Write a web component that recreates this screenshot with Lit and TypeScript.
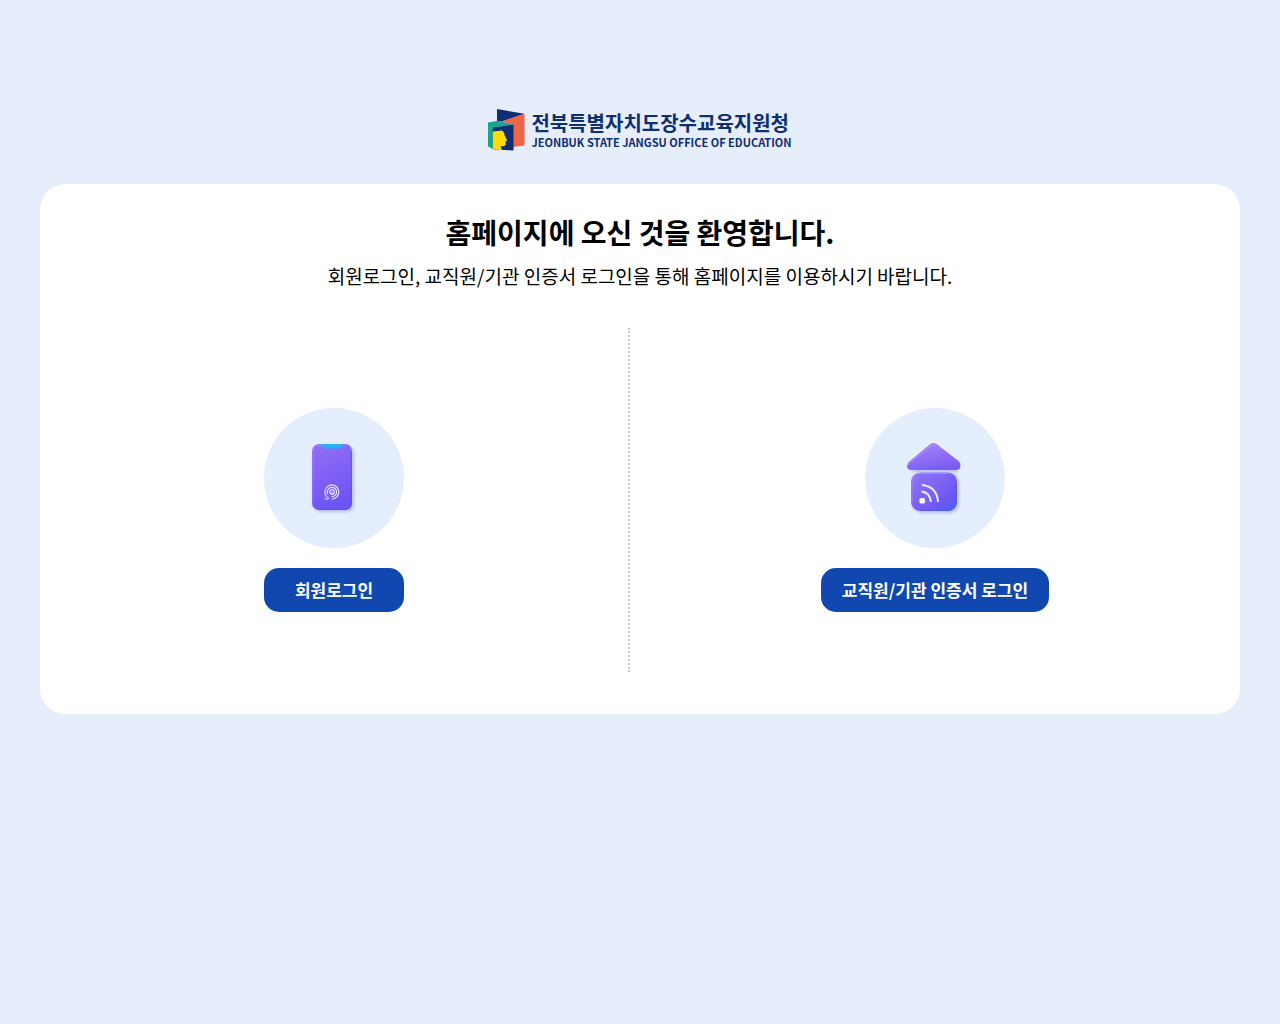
import { LitElement, html, css, svg } from "lit";
import { customElement, property } from "lit/decorators.js";

@customElement("office-logo")
class OfficeLogo extends LitElement {
  static styles = css`
    :host { display: block; }
    .logo {
      display: flex;
      align-items: center;
      gap: 6px;
      color: #0e2f72;
      text-decoration: none;
    }
    .mark { display: block; width: 37px; height: 42px; flex: none; }
    .names { display: flex; flex-direction: column; gap: 2px; padding-top: 2px; }
    .ko {
      font: 700 20px/20px Roboto, "Noto Sans CJK KR", sans-serif;
      white-space: nowrap;
    }
    .en {
      font: 700 11px/12px "Noto Sans CJK KR", sans-serif;
      white-space: nowrap;
    }
  `;

  render() {
    return html`
      <a class="logo" href="#">
        <svg class="mark" viewBox="0 0 37 42" aria-hidden="true">
          <path d="M9 0 36.500 4.800 14 12.500 9 12Z" fill="#0e2f72" />
          <path d="M36.500 4.800V36.500L25 38V15.500L13 12.500Z" fill="#ee6547" />
          <path d="M0 13.500 10 11.800 25.500 15.500 5 18.500V40L0 37.500Z" fill="#16a58e" />
          <path d="M4.800 18.500 25.500 15.500V41.500L4.800 40.500Z" fill="#0e2f72" />
          <path d="M4.800 22.500 14 21.500C16 23 16.500 24.500 16.700 26.500L19.200 31.500 17.500 32.500 17.800 35.500 16.500 37 12.500 37.500 14 41 4.800 40.500Z" fill="#fddc0c" />
        </svg>
        <span class="names">
          <span class="ko">전북특별자치도장수교육지원청</span>
          <span class="en">JEONBUK STATE JANGSU OFFICE OF EDUCATION</span>
        </span>
      </a>
    `;
  }
}

const phoneIcon = svg`
  <defs>
    <linearGradient id="body" x1="0" y1="0" x2="0.3" y2="1">
      <stop offset="0" stop-color="#9470f8" />
      <stop offset="1" stop-color="#6f54f4" />
    </linearGradient>
    <linearGradient id="notch" x1="0" x2="1">
      <stop offset="0" stop-color="#4a9cf5" />
      <stop offset="0.500" stop-color="#18bdf2" />
      <stop offset="1" stop-color="#4a9cf5" />
    </linearGradient>
    <filter id="soft" x="-20%" y="-20%" width="150%" height="150%">
      <feGaussianBlur stdDeviation="1.500" />
    </filter>
  </defs>
  <rect x="50" y="38" width="40" height="66" rx="7" fill="#8fa0d8" opacity="0.600" filter="url(#soft)" />
  <rect x="48" y="36" width="40" height="66" rx="7" fill="url(#body)" />
  <path d="M49 95V43Q49 37 55 37H82" fill="none" stroke="#b09aff" stroke-width="1" opacity="0.500" />
  <path d="M54 101.300H81Q87.300 101.300 87.300 95V43" fill="none" stroke="#5544d8" stroke-width="1" opacity="0.500" />
  <path d="M56 36H80Q79 40.500 75 40.500H61Q57 40.500 56 36Z" fill="url(#notch)" />
  <g fill="none" stroke="#e4dcff" stroke-width="1.200" stroke-linecap="round">
    <path d="M62.500 88.500A7 7 0 1 1 68 91" />
    <path d="M63.500 85.500A4.700 4.700 0 1 1 68 88.700" />
    <circle cx="68" cy="84" r="2.300" />
    <path d="M68 84v1.500M61 91h3v-2" />
  </g>
`;

const houseIcon = svg`
  <defs>
    <linearGradient id="roof" x1="0.200" y1="0" x2="0.600" y2="1">
      <stop offset="0" stop-color="#a585f8" />
      <stop offset="1" stop-color="#7c5cf2" />
    </linearGradient>
    <linearGradient id="base" x1="0" y1="0" x2="1" y2="1">
      <stop offset="0" stop-color="#9676f8" />
      <stop offset="0.700" stop-color="#7058f2" />
      <stop offset="1" stop-color="#4b60ee" />
    </linearGradient>
    <filter id="soft" x="-20%" y="-20%" width="150%" height="150%">
      <feGaussianBlur stdDeviation="1.500" />
    </filter>
  </defs>
  <g fill="#8fa0d8" opacity="0.600" filter="url(#soft)">
    <rect x="48" y="66" width="46" height="39" rx="9" />
    <path d="M46 64H94L72 38Z" />
  </g>
  <path d="M65.500 36Q68.500 33.800 71.500 36L93.500 53Q96 55 95.300 59Q95 62 91 62H46Q42 62 42 58Q42.200 55 45 53Z" fill="url(#roof)" />
  <path d="M43.500 58Q43.500 55.500 46 54L66.500 37.500Q68.500 36 71 37.500" fill="none" stroke="#c4b0ff" stroke-width="1" opacity="0.500" />
  <rect x="46" y="64.500" width="46" height="38.500" rx="9" fill="url(#base)" />
  <path d="M47 94V74Q47 65.500 55 65.500H84" fill="none" stroke="#bba6ff" stroke-width="1" opacity="0.500" />
  <path d="M55 102.400H83Q91.300 102.400 91.300 94V75" fill="none" stroke="#3f5ae6" stroke-width="1" opacity="0.600" />
  <rect x="54.500" y="90" width="5.500" height="5.500" rx="1.500" fill="#fff" />
  <g fill="none" stroke="#f0eaff" stroke-width="2">
    <path d="M56.500 83.500Q65 84.500 66 94" />
    <path d="M57 77Q72 78.500 73 94" />
  </g>
`;

@customElement("login-option")
class LoginOption extends LitElement {
  @property() label = "";
  @property() icon = "phone";

  static styles = css`
    :host { display: block; }
    .option {
      display: flex;
      flex-direction: column;
      align-items: center;
      gap: 20px;
      text-decoration: none;
    }
    .picture {
      display: block;
      width: 140px;
      height: 140px;
      border-radius: 50%;
      background: #e5eefd;
    }
    .label {
      box-sizing: border-box;
      min-width: 140px;
      padding: 9px 21px;
      border-radius: 15px;
      background: #1148b0;
      color: #fff;
      font: 700 17px/26px "Noto Sans CJK KR", sans-serif;
      text-align: center;
    }
  `;

  render() {
    return html`
      <a class="option" href="#">
        <svg class="picture" viewBox="0 0 140 140" aria-hidden="true">
          ${this.icon === "phone" ? phoneIcon : houseIcon}
        </svg>
        <span class="label">${this.label}</span>
      </a>
    `;
  }
}

@customElement("app-root")
class AppRoot extends LitElement {
  static styles = css`
    :host {
      display: block;
      box-sizing: border-box;
      min-height: 100vh;
      padding: 109px 40px 40px;
      background: #e6edfb;
      color: #000;
      font-family: "Noto Sans CJK KR", sans-serif;
    }
    .header {
      display: flex;
      justify-content: center;
      margin-bottom: 33px;
    }
    .card {
      padding: 28px 0 42px;
      border-radius: 25px;
      background: #fff;
      text-align: center;
    }
    .title { margin: 0; font-size: 28px; line-height: 40px; font-weight: 700; }
    .intro { margin: 10px 20px 0; font-size: 19px; line-height: 28px; }
    .options {
      display: grid;
      grid-template-columns: 59fr 61fr;
      margin: 38px 0 0;
      padding: 0;
      list-style: none;
    }
    .cell { display: grid; place-items: center; padding: 80px 0 60px; }
    .cell:first-child { border-right: 2px dotted #ccc; }
  `;

  render() {
    return html`
      <header class="header"><office-logo></office-logo></header>
      <main class="card">
        <h1 class="title">홈페이지에 오신 것을 환영합니다.</h1>
        <p class="intro">회원로그인, 교직원/기관 인증서 로그인을 통해 홈페이지를 이용하시기 바랍니다.</p>
        <ul class="options">
          <li class="cell"><login-option icon="phone" label="회원로그인"></login-option></li>
          <li class="cell"><login-option icon="house" label="교직원/기관 인증서 로그인"></login-option></li>
        </ul>
      </main>
    `;
  }
}
